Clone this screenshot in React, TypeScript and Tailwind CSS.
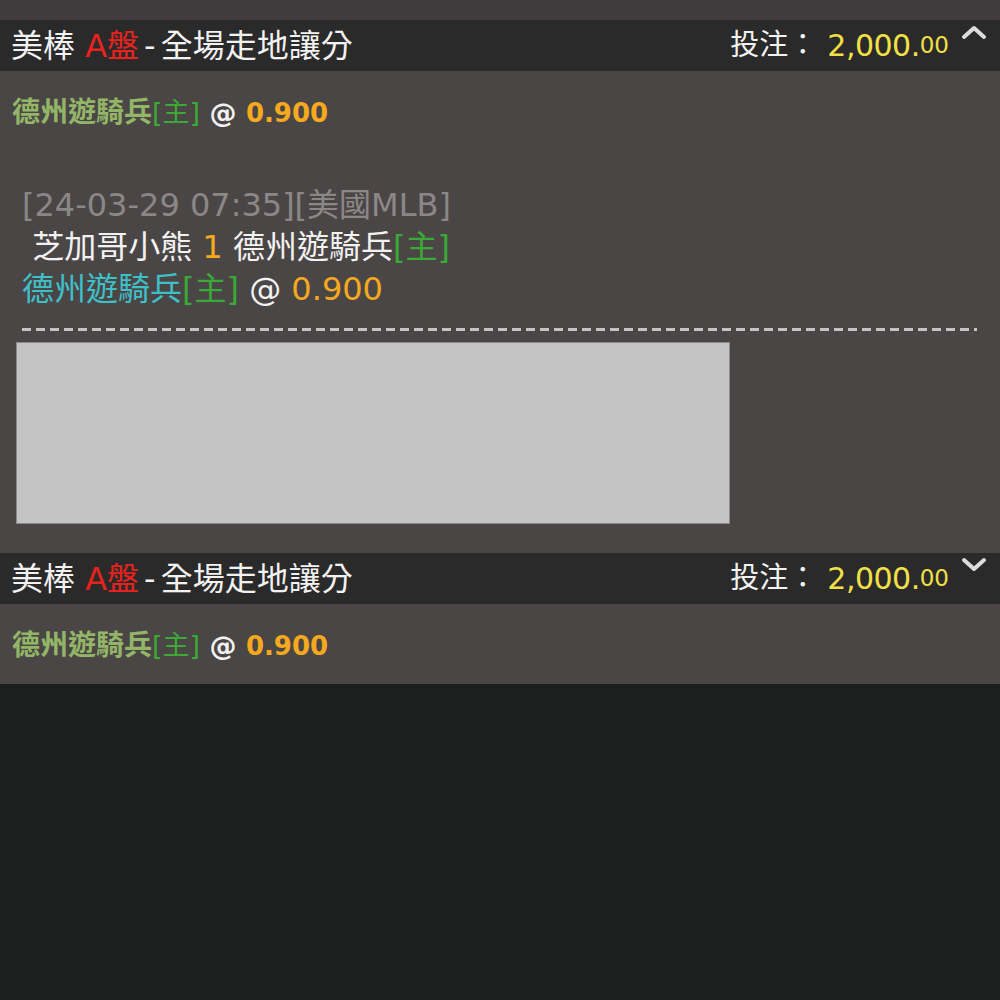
const font = { fontFamily: '"DejaVu Sans", "Noto Sans CJK TC", sans-serif' };

const Chevron = ({ up }: { up: boolean }) => (
  <svg width="26" height="16" viewBox="0 0 26 16" className="mt-[2px]">
    <path
      d={up ? 'M3 13 L13 4 L23 13' : 'M3 3 L13 12 L23 3'}
      fill="none"
      stroke="#dcdcdc"
      strokeWidth="4"
      strokeLinecap="round"
      strokeLinejoin="round"
    />
  </svg>
);

const Header = ({ up }: { up: boolean }) => (
  <div className="flex h-[51px] items-center justify-between bg-[#2b2a2a] pl-[11px] pr-[13px]">
    <div className="text-[32px] leading-none text-[#f2f2f2]">
      美棒 <span className="text-[#e8231f]">A盤</span>
      <span className="px-[5px]">-</span>全場走地讓分
    </div>
    <div className="flex h-full items-start">
      <div className="flex h-full items-center">
        <span className="text-[29px] text-[#f2f2f2]">投注：</span>
        <span className="ml-[10px] text-[30px] tracking-[-0.5px] text-[#f2e048]">2,000.</span>
        <span className="text-[23px] text-[#f2e048]">00</span>
      </div>
      <div className="ml-[12px] pt-[2px]">
        <Chevron up={up} />
      </div>
    </div>
  </div>
);

const Pick = () => (
  <div className="text-[27px] font-bold leading-[40px]">
    <span className="text-[28px] text-[#93b567]">德州遊騎兵</span>
    <span className="font-normal text-[#3aa935]">[主]</span>
    <span className="text-[#f2f2f2]"> @ </span>
    <span className="text-[26px] text-[#f5a91f]">0.900</span>
  </div>
);

export default function App() {
  return (
    <div className="min-h-screen w-[1000px] bg-[#1d1f1f]" style={font}>
      <div className="h-[20px] bg-[#403b3c]" />
      <Header up />
      <div className="bg-[#4b4646] pb-[29px] pl-[12px] pt-[22px]">
        <Pick />
        <div className="mt-[51px] pl-[10px] text-[32px] leading-[42px]">
          <div className="text-[#8c8787]">[24-03-29 07:35][美國MLB]</div>
          <div className="text-[#f2f2f2]">
            {'\u00a0'}芝加哥小熊 <span className="text-[#f5a91f]">1</span> 德州遊騎兵
            <span className="text-[#3aa935]">[主]</span>
          </div>
          <div>
            <span className="text-[#3ec0c8]">德州遊騎兵</span>
            <span className="text-[#3aa935]">[主]</span>
            <span className="text-[#f2f2f2]"> @ </span>
            <span className="text-[#f5a91f]">0.900</span>
          </div>
        </div>
        <div className="ml-[10px] mr-[23px] mt-[18px] h-[3px] bg-[repeating-linear-gradient(90deg,#c4c4c4_0_9px,transparent_9px_14px)]" />
        <div className="ml-[4px] mt-[11px] h-[182px] w-[714px] border border-[#8a8a8a] bg-[#c4c4c4]" />
      </div>
      <Header up={false} />
      <div className="h-[80px] bg-[#4b4646] pl-[12px] pt-[22px]">
        <Pick />
      </div>
    </div>
  );
}
